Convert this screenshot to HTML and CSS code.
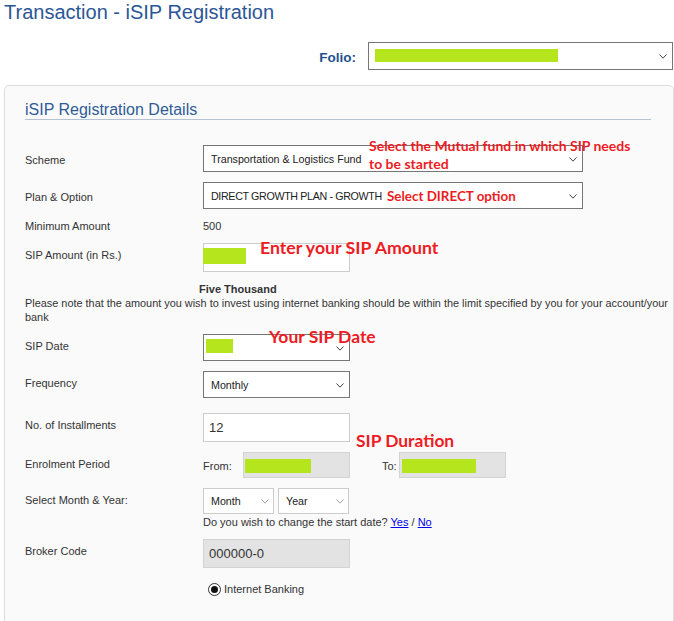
FILE: index.html
```html
<!DOCTYPE html>
<html>
<head>
<meta charset="utf-8">
<title>Transaction - iSIP Registration</title>
<link rel="stylesheet" href="styles.css">
</head>
<body>
<h1 class="page-title">Transaction - iSIP Registration</h1>

<div class="folio-row">
  <span class="folio-label">Folio:</span>
  <div class="select select--folio">
    <span class="redact redact--folio"></span>
    <svg class="chev" viewBox="0 0 8 5" width="8" height="5"><path d="M0.5 0.5L4 4.2L7.5 0.5" fill="none" stroke="currentColor"/></svg>
  </div>
</div>

<section class="panel">
  <h2 class="panel-title">iSIP Registration Details</h2>

  <div class="row row--scheme">
    <div class="label label--tall">Scheme</div>
    <div class="select select--wide">
      <span class="select-text">Transportation &amp; Logistics Fund</span>
      <svg class="chev" viewBox="0 0 8 5" width="8" height="5"><path d="M0.5 0.5L4 4.2L7.5 0.5" fill="none" stroke="currentColor"/></svg>
    </div>
  </div>

  <div class="row row--gap10">
    <div class="label label--tall">Plan &amp; Option</div>
    <div class="select select--wide">
      <span class="select-text select-text--caps">DIRECT GROWTH PLAN - GROWTH</span>
      <svg class="chev" viewBox="0 0 8 5" width="8" height="5"><path d="M0.5 0.5L4 4.2L7.5 0.5" fill="none" stroke="currentColor"/></svg>
    </div>
  </div>

  <div class="row row--gap10">
    <div class="label label--flat">Minimum Amount</div>
    <div class="value-text">500</div>
  </div>

  <div class="row row--gap10">
    <div class="label label--mid">SIP Amount (in Rs.)</div>
    <div class="input">
      <span class="redact redact--amount"></span>
    </div>
  </div>

  <div class="words">Five Thousand</div>
  <p class="note">Please note that the amount you wish to invest using internet banking should be within the limit specified by you for your account/your bank</p>

  <div class="row row--gap10">
    <div class="label label--mid">SIP Date</div>
    <div class="select select--narrow">
      <span class="redact redact--date"></span>
      <svg class="chev" viewBox="0 0 8 5" width="8" height="5"><path d="M0.5 0.5L4 4.2L7.5 0.5" fill="none" stroke="currentColor"/></svg>
    </div>
  </div>

  <div class="row row--gap10">
    <div class="label label--mid">Frequency</div>
    <div class="select select--narrow">
      <span class="select-text">Monthly</span>
      <svg class="chev" viewBox="0 0 8 5" width="8" height="5"><path d="M0.5 0.5L4 4.2L7.5 0.5" fill="none" stroke="currentColor"/></svg>
    </div>
  </div>

  <div class="row row--gap15">
    <div class="label label--mid">No. of Installments</div>
    <div class="input"><span class="input-text">12</span></div>
  </div>

  <div class="row row--gap10">
    <div class="label label--mid">Enrolment Period</div>
    <div class="period">
      <span class="period-from">From:</span>
      <div class="ro-box"><span class="redact redact--from"></span></div>
      <span class="period-to">To:</span>
      <div class="ro-box"><span class="redact redact--to"></span></div>
    </div>
  </div>

  <div class="row row--gap10">
    <div class="label label--mid">Select Month &amp; Year:</div>
    <div class="month-year">
      <div class="mini-select">
        <span class="select-text">Month</span>
        <svg class="chev chev--light" viewBox="0 0 8 5" width="8" height="5"><path d="M0.5 0.5L4 4.2L7.5 0.5" fill="none" stroke="currentColor"/></svg>
      </div>
      <div class="mini-select">
        <span class="select-text">Year</span>
        <svg class="chev chev--light" viewBox="0 0 8 5" width="8" height="5"><path d="M0.5 0.5L4 4.2L7.5 0.5" fill="none" stroke="currentColor"/></svg>
      </div>
    </div>
  </div>

  <div class="row">
    <div class="label"></div>
    <div class="change-date">Do you wish to change the start date? <a href="#" class="link">Yes</a> / <a href="#" class="link">No</a></div>
  </div>

  <div class="row row--gap10">
    <div class="label label--mid">Broker Code</div>
    <div class="ro-input"><span class="input-text">000000-0</span></div>
  </div>

  <div class="row row--radio">
    <div class="label"></div>
    <label class="radio-option"><span class="radio"></span>Internet Banking</label>
  </div>
</section>

<div class="note-red note-red--fund">Select the Mutual fund in which SIP needs<br>to be started</div>
<div class="note-red note-red--direct">Select DIRECT option</div>
<div class="note-red note-red--amount">Enter your SIP Amount</div>
<div class="note-red note-red--date">Your SIP Date</div>
<div class="note-red note-red--duration">SIP Duration</div>
</body>
</html>
```

FILE: styles.css
```css
html, body {
  margin: 0;
  padding: 0;
  background: #ffffff;
}

body {
  font-family: "Liberation Sans", Arial, sans-serif;
  font-size: 11px;
  color: #333333;
  overflow: hidden;
  height: 621px;
  position: relative;
}

.page-title {
  margin: 0;
  padding: 1px 0 0 4px;
  font-size: 20px;
  line-height: 23px;
  font-weight: normal;
  color: #2b5696;
}

.folio-row {
  display: flex;
  justify-content: flex-end;
  align-items: flex-start;
  margin-top: 18px;
  padding-right: 1px;
  gap: 12px;
}

.folio-label {
  margin-top: 8px;
  font-size: 13.5px;
  line-height: 16px;
  font-weight: bold;
  color: #1f4f8e;
}

.select {
  position: relative;
  box-sizing: border-box;
  display: flex;
  align-items: center;
  background: #ffffff;
  border: 1px solid #767676;
  height: 27px;
}

.select--folio {
  width: 305px;
  height: 28px;
}

.select--wide {
  width: 380px;
}

.select--narrow {
  width: 147px;
}

.select-text {
  padding-left: 7px;
  font-size: 10.7px;
  color: #222222;
  white-space: nowrap;
}

.select-text--caps {
  letter-spacing: -0.35px;
}

.chev {
  position: absolute;
  right: 5px;
  top: 50%;
  margin-top: -2px;
  color: #444444;
}

.chev--light {
  color: #a0a0a0;
  right: 4px;
}

.redact {
  position: absolute;
  background: #b5e61d;
}

.redact--folio {
  left: 6px;
  top: 6px;
  width: 183px;
  height: 13px;
}

.panel {
  margin: 15px 0 0 4px;
  padding: 15px 0 60px 20px;
  border: 1px solid #dddddd;
  border-radius: 5px;
  background: #fafafa;
}

.panel-title {
  margin: 0;
  width: 626px;
  font-size: 16px;
  line-height: 18px;
  font-weight: normal;
  color: #2f5b97;
  border-bottom: 1px solid #b4c2d4;
}

.row {
  display: flex;
  align-items: flex-start;
}

.row--scheme {
  margin-top: 25px;
}

.row--gap10 {
  margin-top: 10px;
}

.row--gap15 {
  margin-top: 15px;
}

.row--radio {
  margin-top: 14px;
}

.label {
  flex: 0 0 178px;
  line-height: 14px;
  color: #333333;
}

.label--tall {
  padding-top: 8px;
}

.label--mid {
  padding-top: 5px;
}

.value-text {
  line-height: 14px;
  color: #333333;
}

.input {
  position: relative;
  box-sizing: border-box;
  width: 147px;
  height: 29px;
  background: #ffffff;
  border: 1px solid #cccccc;
  display: flex;
  align-items: center;
}

.input-text {
  padding-left: 5px;
  font-size: 13px;
  color: #333333;
}

.redact--amount {
  left: -1px;
  top: 4px;
  width: 43px;
  height: 16px;
}

.redact--date {
  left: 2px;
  top: 4px;
  width: 27px;
  height: 14px;
}

.words {
  margin-top: 10px;
  padding-left: 174px;
  font-weight: bold;
  line-height: 14px;
  color: #333333;
}

.note {
  margin: 0;
  width: 660px;
  font-size: 10.9px;
  line-height: 14px;
  color: #333333;
}

.period {
  display: flex;
  align-items: center;
  height: 26px;
}

.period-from {
  width: 40px;
  padding-top: 2px;
}

.period-to {
  width: 17px;
  margin-left: 32px;
  padding-top: 2px;
}

.ro-box {
  position: relative;
  box-sizing: border-box;
  width: 107px;
  height: 26px;
  background: #e3e3e3;
  border: 1px solid #d3d3d3;
}

.redact--from {
  left: 1px;
  top: 6px;
  width: 66px;
  height: 14px;
}

.redact--to {
  left: 2px;
  top: 6px;
  width: 74px;
  height: 14px;
}

.month-year {
  display: flex;
  gap: 4px;
}

.mini-select {
  position: relative;
  box-sizing: border-box;
  width: 71px;
  height: 26px;
  background: #ffffff;
  border: 1px solid #cccccc;
  display: flex;
  align-items: center;
}

.change-date {
  margin-top: 1px;
  line-height: 14px;
  color: #333333;
}

.link {
  color: #0000ee;
  text-decoration: underline;
}

.ro-input {
  box-sizing: border-box;
  width: 147px;
  height: 29px;
  background: #e3e3e3;
  border: 1px solid #d3d3d3;
  display: flex;
  align-items: center;
}

.radio-option {
  display: flex;
  align-items: center;
  gap: 3px;
  padding-left: 5px;
  line-height: 14px;
  color: #333333;
}

.radio {
  box-sizing: border-box;
  width: 13px;
  height: 13px;
  border: 1px solid #333333;
  border-radius: 50%;
  background: #ffffff;
  display: grid;
  place-items: center;
}

.radio::after {
  content: "";
  width: 7px;
  height: 7px;
  border-radius: 50%;
  background: #111111;
}

.note-red {
  position: absolute;
  font-family: Lato, "Open Sans", sans-serif;
  font-weight: bold;
  color: #ed1c24;
  white-space: nowrap;
}

.note-red--fund {
  left: 369px;
  top: 137px;
  font-size: 14px;
  line-height: 18px;
}

.note-red--direct {
  left: 387px;
  top: 188px;
  font-size: 13.4px;
  line-height: 17px;
}

.note-red--amount {
  left: 260px;
  top: 238px;
  font-size: 17.7px;
  line-height: 20px;
}

.note-red--date {
  left: 269px;
  top: 327px;
  font-size: 17.5px;
  line-height: 20px;
}

.note-red--duration {
  left: 356px;
  top: 431px;
  font-size: 17.4px;
  line-height: 20px;
}
```
